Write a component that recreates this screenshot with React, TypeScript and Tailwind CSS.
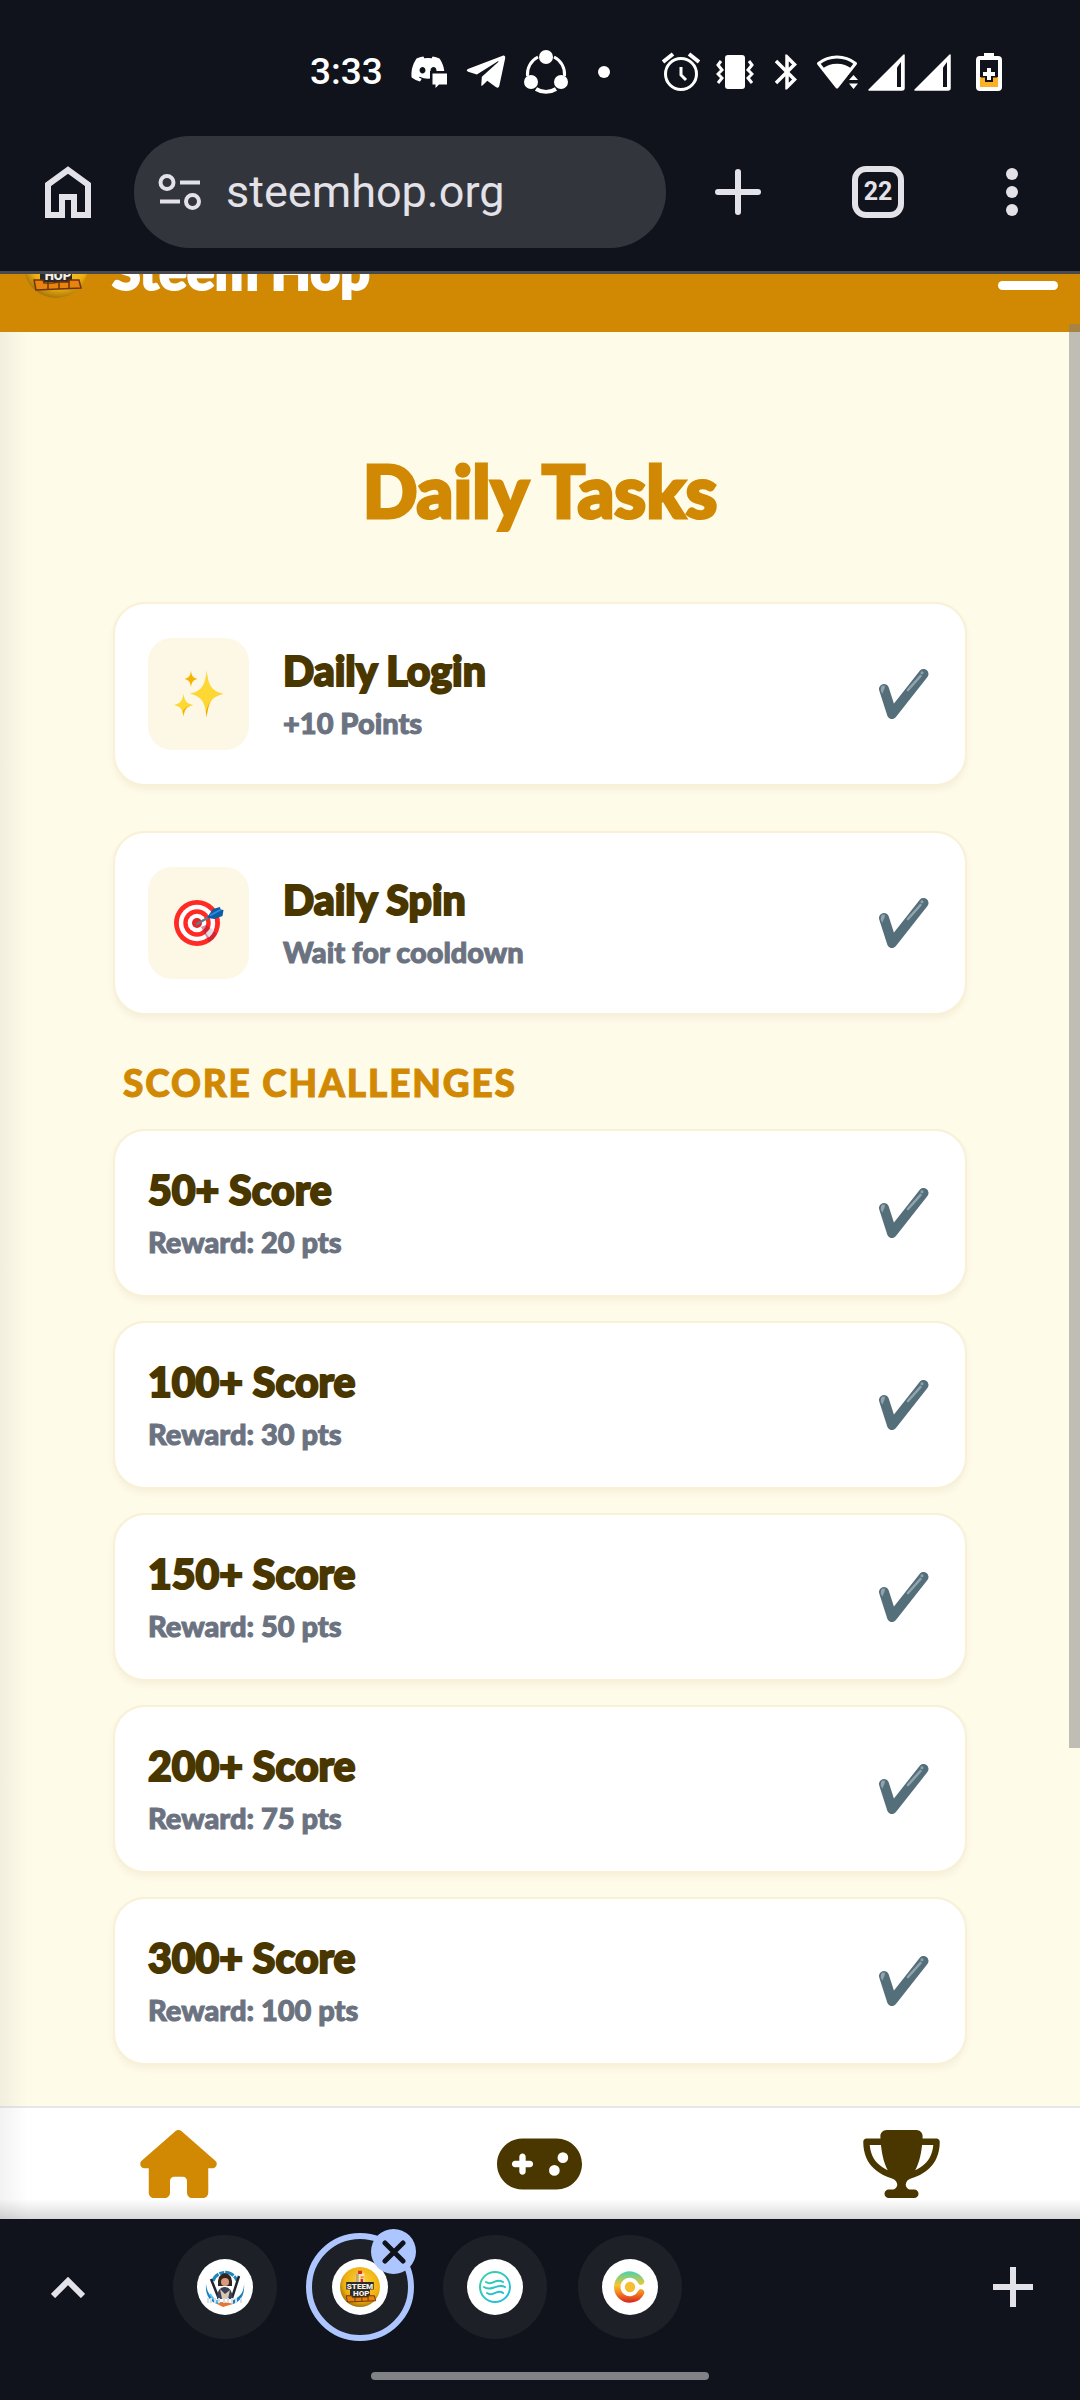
import type { ReactElement, ReactNode } from 'react'
import { FaDiscord, FaGamepad, FaHouse, FaTrophy } from 'react-icons/fa6'
import { FaTelegramPlane } from 'react-icons/fa'
import { MdBluetooth } from 'react-icons/md'

type Task = {
  title: string
  detail: string
  icon?: ReactNode
}

function SparklesIcon(): ReactElement {
  return (
    <svg viewBox="0 0 50 48" className="h-12 w-[50px]" aria-hidden="true">
      <g fill="#fdd835">
        <path d="M32.7 0.3c1.6 14 4 20.6 16.7 23.4-12.7 2.8-15.1 9.6-16.7 23.6-1.6-14-4-20.8-16.7-23.6C28.700 20.900 31.100 14.300 32.700 0.300Z" />
        <path d="M9.500 23.500c1 7.200 2.600 9.800 9.600 11.500-7 1.700-8.600 4.300-9.600 11.500C8.500 39.300 6.900 36.700 0 35c6.900-1.700 8.500-4.300 9.500-11.500Z" />
      </g>
      <path d="M17 .8c.7 5 1.700 7 6.600 8.200-4.900 1.200-5.900 3.200-6.600 8.200-.7-5-1.700-7-6.600-8.200C15.300 7.800 16.300 5.800 17 .8Z" fill="#f4b400" />
      <path d="M49.400 23.700c-12.700 2.800-15.100 9.600-16.700 23.600-.3-2-.5-3.800-.8-5.500 2.700-9.500 6.200-15.300 17.500-18.100Z" fill="#f4a300" />
      <path d="M19.100 35c-7 1.700-8.600 4.300-9.600 11.500-.4-2-.6-3.600-1-5 1.800-3.500 4-5.300 10.600-6.500Z" fill="#f4b400" />
    </svg>
  )
}

function TargetIcon(): ReactElement {
  return (
    <svg viewBox="0 0 50 48" className="h-12 w-[50px]" aria-hidden="true">
      <circle cx="23" cy="24" r="23" fill="#ff2a23" />
      <circle cx="23" cy="24" r="18.200" fill="#fff" />
      <circle cx="23" cy="24" r="13.700" fill="#ff2a23" />
      <circle cx="23" cy="24" r="9.300" fill="#fff" />
      <circle cx="23" cy="24" r="5" fill="#e5242c" />
      <path d="M27 28l5-2 11 9a23 23 0 0 1-8 8Z" fill="#a81c40" opacity=".5" />
      <path d="M32 34l5-5 3 2.500a18 18 0 0 1-5 7Z" fill="#e2dfe4" />
      <path d="M22 25.500l15-8.500" stroke="#607d8b" strokeWidth="2.500" />
      <path d="M34 17l5-7 7-2 .5 2.500 3 .5-1 6-8 3-7-1Z" fill="#0d5ca6" />
      <path d="M36 16.500l11-6" stroke="#2f8fe0" strokeWidth="1.500" />
    </svg>
  )
}

function CheckMark(): ReactElement {
  return (
    <svg viewBox="0 0 50 50" className="size-[50px] shrink-0" role="img" aria-label="Completed">
      <path
        d="M5 20 13 45 44.500 5"
        fill="none"
        stroke="#546e7a"
        strokeWidth="10"
        strokeLinecap="round"
        strokeLinejoin="round"
      />
      <path d="M29 21 41.500 7" stroke="#90a4ae" strokeWidth="2.600" strokeLinecap="round" />
      <circle cx="43" cy="3.700" r="1.500" fill="#90a4ae" />
      <path d="M1.800 22c-.3-4.500 1-6 4-5.200.4 3-1.200 4-2.300 8Z" fill="#90a4ae" />
    </svg>
  )
}

function SteemHopLogo({ className }: { className: string }): ReactElement {
  return (
    <svg viewBox="0 0 64 64" className={className} aria-hidden="true">
      <defs>
        <radialGradient id="hop-gold" cx="55%" cy="40%" r="60%">
          <stop offset="0" stopColor="#ffd53a" />
          <stop offset=".75" stopColor="#eeb010" />
          <stop offset="1" stopColor="#a9780c" />
        </radialGradient>
      </defs>
      <circle cx="32" cy="32" r="32" fill="url(#hop-gold)" />
      <path d="M25 10h14v15H25Z" fill="#f3e3b8" />
      <path d="M25 10h5v15h-5Z" fill="#c9a869" />
      <path d="M29 6h6v5h-6ZM33 19h4v6h-4Z" fill="#d5281e" />
      <path d="M33 15h5v3h-5Z" fill="#f08a1c" />
      <path d="M10 24h44v12h-6v12H16V36h-6Z" fill="#2d2b28" />
      <path d="M10 46h9l1 3h9l6-1h10v-2h10l2 8-45 2Z" fill="#e8830f" stroke="#6f3408" strokeWidth="1.500" />
      <path d="M24 48v7M35 48v7M45 46v8" stroke="#6f3408" strokeWidth="1.500" />
      <g fill="#f4f0e6" fontFamily="Roboto, sans-serif" fontWeight="900" textAnchor="middle">
        <text x="32" y="35" fontSize="13">STEEM</text>
        <text x="34" y="46" fontSize="13">HOP</text>
      </g>
    </svg>
  )
}

function StatusBar(): ReactElement {
  return (
    <div className="flex h-[120px] items-center justify-between pt-6 pr-[78px] pl-[310px] text-white">
      <div className="flex items-center">
        <time className="w-[100px] text-[37px] leading-10 font-medium">3:33</time>
        <svg viewBox="0 0 38 34" className="h-[34px] w-[38px]" aria-hidden="true">
          <FaDiscord y="-4" size={36} />
          <path d="M20 16h18v18H20Z" fill="#10131b" />
          <path d="M22.500 18.500H37v11H29l-3.500 3.500v-3.500h-3Z" fill="currentColor" />
        </svg>
        <FaTelegramPlane className="ml-4 h-[44px] w-[44px]" />
        <svg viewBox="0 0 44 44" className="ml-4 size-[44px]" fill="none" stroke="currentColor" aria-hidden="true">
          <path d="M14 7A19 19 0 0 0 3.500 26" strokeWidth="3" />
          <path d="M30 7a19 19 0 0 1 10.500 19" strokeWidth="3" />
          <path d="M12 39a19 19 0 0 0 20 0" strokeWidth="4" />
          <g fill="currentColor" stroke="none">
            <circle cx="22" cy="7" r="7" />
            <circle cx="7" cy="32" r="7" />
            <circle cx="37" cy="32" r="7" />
          </g>
        </svg>
        <span className="ml-[30px] size-3 rounded-full bg-white" />
      </div>
      <div className="flex items-center">
        <svg viewBox="0 0 38 40" className="h-10 w-[38px]" fill="none" stroke="currentColor" strokeWidth="3" aria-hidden="true">
          <circle cx="19" cy="22" r="15.500" />
          <path d="M1 10 11 2M27 2l10 8" strokeWidth="4" />
          <path d="M19 15v8l5 5" />
        </svg>
        <svg viewBox="0 0 38 36" className="ml-4 h-9 w-[38px]" aria-hidden="true">
          <rect x="9" y="1" width="20" height="34" rx="3" fill="currentColor" />
          <path d="M5 7 2 11l4 5-4 4 4 4-4 5M33 7l3 4-4 5 4 4-4 4 4 5" fill="none" stroke="currentColor" strokeWidth="3" />
        </svg>
        <MdBluetooth className="ml-3 size-[42px]" />
        <svg viewBox="0 0 44 36" className="ml-2 h-9 w-11" aria-hidden="true">
          <path d="M2.500 9.500a30 30 0 0 1 37 0L21 33Z" fill="none" stroke="currentColor" strokeWidth="3" strokeLinejoin="round" />
          <path d="M6 15a24 24 0 0 1 30 0L21 34Z" fill="currentColor" />
          <path d="M32 21h12v15H32Z" fill="#10131b" />
          <path d="m33 26 4.500-5 4.500 5ZM33 29.500h9L37.500 35Z" fill="currentColor" />
        </svg>
        <SignalIcon />
        <SignalIcon />
        <svg viewBox="0 0 26 38" className="ml-6 h-[38px] w-[26px]" aria-hidden="true">
          <path d="M8 0h10v5H8Z" fill="currentColor" />
          <rect x="2" y="5" width="22" height="31" rx="2" fill="none" stroke="currentColor" strokeWidth="4" />
          <path d="M4 24h18v10H4Z" fill="#fdb022" />
          <path d="M13 12v17M5 20.500h16" stroke="#10131b" strokeWidth="8" />
          <path d="M13 15v12M7 21h12" stroke="currentColor" strokeWidth="4" />
        </svg>
      </div>
    </div>
  )
}

function SignalIcon(): ReactElement {
  return (
    <svg viewBox="0 0 38 38" className="ml-2 size-[38px]" aria-hidden="true">
      <path d="M1 37 36 2v33q0 2-2 2Z" fill="currentColor" stroke="currentColor" strokeWidth="1.500" strokeLinejoin="round" />
      <path d="M29 14.500 33 9v25h-4Z" fill="#10131b" />
    </svg>
  )
}

function BrowserToolbar(): ReactElement {
  return (
    <div className="flex h-[154px] items-center border-b-[3px] border-[#47494f] pr-9 pb-2 pl-9 text-[#e3e2e8]">
      <button type="button" aria-label="Home" className="flex size-16 shrink-0 items-center justify-center">
        <svg viewBox="0 0 46 52" className="h-[52px] w-[46px]" fill="none" stroke="currentColor" strokeWidth="6" aria-hidden="true">
          <path d="M3 49V18.500L23 4l20 14.500V49H29V31H17v18Z" />
        </svg>
      </button>
      <div className="ml-[34px] flex h-28 min-w-0 flex-1 items-center rounded-full bg-[#33353d] px-6">
        <svg viewBox="0 0 44 38" className="h-[38px] w-11 shrink-0" fill="none" stroke="currentColor" strokeWidth="4" aria-hidden="true">
          <circle cx="9" cy="9.500" r="6.500" />
          <path d="M22 9.500h20M2 28.500h20" />
          <circle cx="34.500" cy="28.500" r="6.500" />
        </svg>
        <input
          aria-label="Address"
          defaultValue="steemhop.org"
          className="ml-6 w-full min-w-0 bg-transparent text-[45px] leading-[56px] outline-none"
        />
      </div>
      <button type="button" aria-label="New tab" className="ml-10 flex size-16 items-center justify-center">
        <svg viewBox="0 0 46 46" className="size-[46px]" stroke="currentColor" strokeWidth="6" strokeLinecap="round" aria-hidden="true">
          <path d="M23 3v40M3 23h40" />
        </svg>
      </button>
      <button
        type="button"
        aria-label="22 open tabs"
        className="ml-[82px] size-[52px] rounded-[14px] border-[6px] border-[#e3e2e8] text-center text-[25px] leading-10 font-bold"
      >
        22
      </button>
      <button type="button" aria-label="Menu" className="ml-[76px] flex w-16 flex-col items-center gap-[6px]">
        <span className="size-3 rounded-full bg-[#e3e2e8]" />
        <span className="size-3 rounded-full bg-[#e3e2e8]" />
        <span className="size-3 rounded-full bg-[#e3e2e8]" />
      </button>
    </div>
  )
}

// Scrolled partly under the browser toolbar, so only its lower part is visible.
function SiteHeader(): ReactElement {
  return (
    <header className="flex h-[58px] items-end overflow-hidden bg-[#d18904]">
      <div className="flex h-[132px] w-full shrink-0 items-center justify-between pr-[22px] pl-6 text-white">
        <a href="#home" className="flex items-center gap-6">
          <SteemHopLogo className="size-16" />
          <span className="pt-2 text-[52px] leading-[60px] font-black [-webkit-text-stroke:2px_#fff]">Steem Hop</span>
        </a>
        <button type="button" aria-label="Open menu" className="flex flex-col gap-[10px]">
          <span className="h-[9px] w-[60px] rounded-full bg-white" />
          <span className="h-[9px] w-[60px] rounded-full bg-white" />
          <span className="h-[9px] w-[60px] rounded-full bg-white" />
        </button>
      </div>
    </header>
  )
}

const dailyTasks: Task[] = [
  { title: 'Daily Login', detail: '+10 Points', icon: <SparklesIcon /> },
  { title: 'Daily Spin', detail: 'Wait for cooldown', icon: <TargetIcon /> }
]

const scoreTasks: Task[] = [
  { title: '50+ Score', detail: 'Reward: 20 pts' },
  { title: '100+ Score', detail: 'Reward: 30 pts' },
  { title: '150+ Score', detail: 'Reward: 50 pts' },
  { title: '200+ Score', detail: 'Reward: 75 pts' },
  { title: '300+ Score', detail: 'Reward: 100 pts' }
]

function TaskCard({ title, detail, icon }: Task): ReactElement {
  return (
    <li className="flex items-center rounded-[32px] border-2 border-[#f9f0d6] bg-white px-[33px] py-[34px] shadow-[0_4px_6px_rgba(80,60,0,0.06)]">
      {icon ? (
        <span className="mr-[34px] flex h-28 w-[101px] shrink-0 items-center justify-center rounded-3xl bg-[#fdf7e6]">
          {icon}
        </span>
      ) : null}
      <div className="flex-1">
        <h3 className="text-[41px] leading-[50px] font-black text-[#4a3700] [-webkit-text-stroke:2px_#4a3700]">{title}</h3>
        <p className="mt-2 text-[29px] leading-[38px] font-black text-[#6b7280] [-webkit-text-stroke:1px_#6b7280]">{detail}</p>
      </div>
      <span className="mr-[3px]">
        <CheckMark />
      </span>
    </li>
  )
}

function TabFavicon({ label, active = false, children }: { label: string; active?: boolean; children: ReactNode }): ReactElement {
  return (
    <div className="relative flex w-[135px] justify-center">
      <button
        type="button"
        aria-label={label}
        className={`flex items-center justify-center rounded-full bg-[#1d2027] ${active ? 'size-[108px] border-[6px] border-[#adc6ff]' : 'size-[104px]'}`}
      >
        <span className="flex size-14 items-center justify-center rounded-full bg-white">{children}</span>
      </button>
      {active ? (
        <button
          type="button"
          aria-label="Close tab"
          className="absolute -top-1 right-[11px] flex size-[45px] items-center justify-center rounded-full bg-[#adc6ff]"
        >
          <svg viewBox="0 0 24 24" className="size-6" stroke="#10131b" strokeWidth="5" strokeLinecap="round" aria-hidden="true">
            <path d="m3 3 18 18M21 3 3 21" />
          </svg>
        </button>
      ) : null}
    </div>
  )
}

function TabStrip(): ReactElement {
  return (
    <div className="flex h-[181px] flex-col items-center justify-between pt-[14px] pb-5 text-[#e3e2e8]">
      <div className="flex h-[108px] w-full items-center justify-between pr-[47px] pl-[51px]">
        <div className="flex items-center">
          <button type="button" aria-label="Show tabs" className="mr-[72px]">
            <svg viewBox="0 0 34 22" className="h-[22px] w-[34px]" fill="none" stroke="currentColor" strokeWidth="6" aria-hidden="true">
              <path d="M2 20 17 5l15 15" />
            </svg>
          </button>
          <TabFavicon label="Game tab">
            <svg viewBox="0 0 40 40" className="size-10" aria-hidden="true">
              <path d="M8 14a12.500 12 0 0 1 24 0" fill="none" stroke="#1c86bd" strokeWidth="3" strokeDasharray="9 1 5 1" />
              <path d="M1 17c1 9 5 14 13 17l-1 3C5 35 0 28 1 17ZM39 17c0 9-5 14-13 17l2 3c8-3 12-10 11-20Z" fill="#147fc0" />
              <path d="M5 27c3 6 8 9 14 10" fill="none" stroke="#5cc4ea" strokeWidth="2" />
              <path d="M6 12l8 20M34 9l-7 22" stroke="#20242f" strokeWidth="2.500" />
              <path d="M13 19q-1-12 7-13 8 1 7 13Z" fill="#35231f" />
              <circle cx="20" cy="15" r="4" fill="#d99a7c" />
              <path d="M12 32q0-12 8-12 7 0 8 12Z" fill="#384256" />
              <path d="M15 22l5 5 5-4-2 9h-6Z" fill="#d9c5b0" />
              <path d="M12 37l5-2 8 1 3 1-10 3Z" fill="#e8762f" />
              <path d="M3 31v5M6 31v5M10 31v5M14 31v5M19 31v5M23 31v5M27 31v5M31 31v5M36 31v5" stroke="#d6dfe8" strokeWidth="2" />
            </svg>
          </TabFavicon>
          <TabFavicon label="Steem Hop" active>
            <SteemHopLogo className="size-10" />
          </TabFavicon>
          <TabFavicon label="Waves tab">
            <svg viewBox="0 0 32 32" className="size-8" fill="none" stroke="url(#wave)" strokeWidth="2" strokeLinecap="round" aria-hidden="true">
              <defs>
                <linearGradient id="wave" x1="0" y1="0" x2="32" y2="32" gradientUnits="userSpaceOnUse">
                  <stop stopColor="#38d39f" />
                  <stop offset="1" stopColor="#22b8ea" />
                </linearGradient>
              </defs>
              <circle cx="16" cy="16" r="15" />
              <path d="M7 11c3.500 2.500 5.500 1 8 0s5-2.500 9 0M5 16c4 3 7 1.500 10 .5s7-3 11-.5M8 22c3.500 2.500 5.500 1 8 0s5-2.500 8 0" />
            </svg>
          </TabFavicon>
          <TabFavicon label="Coin tab">
            <svg viewBox="0 0 32 32" className="size-8" aria-hidden="true">
              <defs>
                <linearGradient id="coin" x1="0" y1="0" x2="0" y2="32" gradientUnits="userSpaceOnUse">
                  <stop stopColor="#43d3b1" />
                  <stop offset=".45" stopColor="#f7c52f" />
                  <stop offset=".7" stopColor="#f0801f" />
                  <stop offset="1" stopColor="#d51f1f" />
                </linearGradient>
              </defs>
              <path d="M27 10.500a12.500 12.500 0 1 0 0 11" fill="none" stroke="url(#coin)" strokeWidth="6.500" strokeLinecap="round" />
              <circle cx="16" cy="16" r="5.200" fill="#f5bf31" />
            </svg>
          </TabFavicon>
        </div>
        <button type="button" aria-label="Add tab">
          <svg viewBox="0 0 40 40" className="size-10" stroke="currentColor" strokeWidth="6" aria-hidden="true">
            <path d="M20 0v40M0 20h40" />
          </svg>
        </button>
      </div>
      <span className="h-2 w-[338px] rounded-full bg-[#808285]" />
    </div>
  )
}

export default function App(): ReactElement {
  return (
    <div className="flex min-h-screen flex-col bg-[#10131b] font-[Roboto,sans-serif]">
      <StatusBar />
      <BrowserToolbar />
      <div className="relative flex flex-1 flex-col bg-[#fffbe9] font-[Lato,sans-serif]">
        <SiteHeader />
        <main className="flex-1 px-[113px] pt-[118px] pb-9">
          <h1 className="text-center text-[72px] leading-[80px] font-black text-[#d18904] [-webkit-text-stroke:3px_#d18904]">
            Daily Tasks
          </h1>
          <ul className="mt-[72px] flex flex-col gap-[45px]">
            {dailyTasks.map((task) => (
              <TaskCard key={task.title} {...task} />
            ))}
          </ul>
          <h2 className="mt-[46px] mb-6 pl-[10px] text-[37px] leading-[44px] font-black tracking-wider text-[#d18904] uppercase [-webkit-text-stroke:1px_#d18904]">
            Score Challenges
          </h2>
          <ul className="flex flex-col gap-6">
            {scoreTasks.map((task) => (
              <TaskCard key={task.title} {...task} />
            ))}
          </ul>
        </main>
        <nav className="flex h-[113px] items-center justify-around border-t-2 border-[#e5e7eb] bg-white text-[#4a3700]">
          <a href="#home" aria-label="Home" className="text-[#d18904]">
            <FaHouse className="h-[68px] w-[77px]" />
          </a>
          <a href="#play" aria-label="Play">
            <FaGamepad className="h-[68px] w-[85px]" />
          </a>
          <a href="#leaderboard" aria-label="Leaderboard">
            <FaTrophy className="h-[68px] w-[77px]" />
          </a>
        </nav>
        <div className="pointer-events-none absolute top-[58px] bottom-0 left-0 w-7 bg-linear-to-r from-black/5 to-transparent" />
        <div className="pointer-events-none absolute inset-x-0 bottom-0 h-5 bg-linear-to-t from-black/15 to-transparent" />
        <div className="pointer-events-none absolute top-[50px] right-0 bottom-[471px] w-[11px] bg-[#808080]/50" />
      </div>
      <TabStrip />
    </div>
  )
}
